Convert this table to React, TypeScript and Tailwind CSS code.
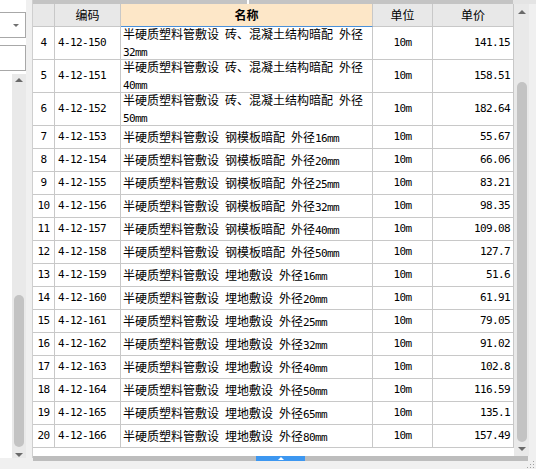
import React from "react";

type Row = { n: number; code: string; name: string; unit: string; price: string; tall?: boolean };

const rows: Row[] = [
  { n: 4, code: "4-12-150", name: "半硬质塑料管敷设 砖、混凝土结构暗配 外径32mm", unit: "10m", price: "141.15", tall: true },
  { n: 5, code: "4-12-151", name: "半硬质塑料管敷设 砖、混凝土结构暗配 外径40mm", unit: "10m", price: "158.51", tall: true },
  { n: 6, code: "4-12-152", name: "半硬质塑料管敷设 砖、混凝土结构暗配 外径50mm", unit: "10m", price: "182.64", tall: true },
  { n: 7, code: "4-12-153", name: "半硬质塑料管敷设 钢模板暗配 外径16mm", unit: "10m", price: "55.67" },
  { n: 8, code: "4-12-154", name: "半硬质塑料管敷设 钢模板暗配 外径20mm", unit: "10m", price: "66.06" },
  { n: 9, code: "4-12-155", name: "半硬质塑料管敷设 钢模板暗配 外径25mm", unit: "10m", price: "83.21" },
  { n: 10, code: "4-12-156", name: "半硬质塑料管敷设 钢模板暗配 外径32mm", unit: "10m", price: "98.35" },
  { n: 11, code: "4-12-157", name: "半硬质塑料管敷设 钢模板暗配 外径40mm", unit: "10m", price: "109.08" },
  { n: 12, code: "4-12-158", name: "半硬质塑料管敷设 钢模板暗配 外径50mm", unit: "10m", price: "127.7" },
  { n: 13, code: "4-12-159", name: "半硬质塑料管敷设 埋地敷设 外径16mm", unit: "10m", price: "51.6" },
  { n: 14, code: "4-12-160", name: "半硬质塑料管敷设 埋地敷设 外径20mm", unit: "10m", price: "61.91" },
  { n: 15, code: "4-12-161", name: "半硬质塑料管敷设 埋地敷设 外径25mm", unit: "10m", price: "79.05" },
  { n: 16, code: "4-12-162", name: "半硬质塑料管敷设 埋地敷设 外径32mm", unit: "10m", price: "91.02" },
  { n: 17, code: "4-12-163", name: "半硬质塑料管敷设 埋地敷设 外径40mm", unit: "10m", price: "102.8" },
  { n: 18, code: "4-12-164", name: "半硬质塑料管敷设 埋地敷设 外径50mm", unit: "10m", price: "116.59" },
  { n: 19, code: "4-12-165", name: "半硬质塑料管敷设 埋地敷设 外径65mm", unit: "10m", price: "135.1" },
  { n: 20, code: "4-12-166", name: "半硬质塑料管敷设 埋地敷设 外径80mm", unit: "10m", price: "157.49" },
];

function Mixed({ text }: { text: string }) {
  const parts = text.split(/([\x00-\x7F]+)/).filter((p) => p.length > 0);
  return (
    <>
      {parts.map((p, i) =>
        /^[\x00-\x7F]+$/.test(p) ? (
          <span key={i} className="font-['DejaVu_Sans_Mono'] text-[11px] tracking-[-0.62px] whitespace-pre">
            {p}
          </span>
        ) : (
          <span key={i}>{p}</span>
        )
      )}
    </>
  );
}

function UpTri({ color = "border-b-[#6a6a6a]" }: { color?: string }) {
  return <div className={`w-0 h-0 border-x-[4px] border-x-transparent border-b-[4px] ${color}`} />;
}
function DownTri() {
  return <div className="w-0 h-0 border-x-[4px] border-x-transparent border-t-[4px] border-t-[#6a6a6a]" />;
}

export default function App() {
  return (
    <div className="w-[536px] h-[469px] flex flex-col bg-[#f0f0f0] overflow-hidden font-['Noto_Sans_CJK_SC',sans-serif] text-[12px] text-black">
      <div className="flex h-[461px]">
        {/* left panel */}
        <div className="w-[26px] flex flex-col">
          <div className="h-[458px] bg-white flex flex-col">
            <div className="mt-[12px] h-[26px] w-[26px] border-y border-r border-[#a8a8a8] flex items-center justify-end pr-[6px]">
              <div className="w-0 h-0 border-x-[3px] border-x-transparent border-t-[3px] border-t-[#707070]" />
            </div>
            <div className="mt-[7px] h-[26px] w-[26px] border-y border-r border-[#a8a8a8]" />
            <div className="mt-[3px] ml-[12px] w-[14px] flex-1 bg-[#e9e9e9] flex flex-col items-center">
              <div className="mt-[4px]">
                <UpTri />
              </div>
              <div className="mt-[213px] w-[10px] h-[152px] rounded-[5px] bg-[#c3c3c3]" />
              <div className="mt-[6px]">
                <DownTri />
              </div>
            </div>
          </div>
        </div>
        {/* splitter */}
        <div className="w-[6px] h-[458px] bg-[#f0f0f0]" />
        <div className="w-[1px] h-[458px] bg-[#cfcfcf]" />
        {/* table panel */}
        <div className="flex-1 flex flex-col">
          <div className="h-[4px] flex">
            <div className="w-[214px] bg-[#c4c4c4]" />
            <div className="w-[2px] bg-white" />
            <div className="w-[264px] bg-[#c4c4c4]" />
            <div className="flex-1 bg-[#e4e4e4]" />
          </div>
          <div className="h-[452px] flex">
            <div className="w-[481px] bg-white flex flex-col">
              {/* header */}
              <div className="flex h-[23px]">
                <div className="w-[22px] bg-[#e8e8e8] border-r border-b border-[#c8c8c8]" />
                <div className="w-[66px] bg-[#e8e8e8] border-r border-b border-[#c8c8c8] flex items-center justify-center">编码</div>
                <div className="w-[252px] bg-[#fde7c8] border-r border-[#c8c8c8] border-b border-b-[#4a90d9] flex items-center justify-center font-bold">名称</div>
                <div className="w-[60px] bg-[#e8e8e8] border-r border-b border-[#c8c8c8] flex items-center justify-center">单位</div>
                <div className="w-[81px] bg-[#e8e8e8] border-r border-b border-[#c8c8c8] flex items-center justify-center">单价</div>
              </div>
              {rows.map((r) => (
                <div key={r.n} className={`flex border-b border-[#c8c8c8] ${r.tall ? "h-[33px]" : "h-[23px]"}`}>
                  <div className="w-[22px] border-r border-[#c8c8c8] flex items-center justify-center">
                    <Mixed text={String(r.n)} />
                  </div>
                  <div className="w-[66px] border-r border-[#c8c8c8] flex items-center pl-[3px]">
                    <Mixed text={r.code} />
                  </div>
                  <div className="w-[252px] border-r border-[#c8c8c8] flex items-center pl-[2px] pr-[1px] leading-[15px]">
                    <div>
                      <Mixed text={r.name} />
                    </div>
                  </div>
                  <div className="w-[60px] border-r border-[#c8c8c8] flex items-center justify-center">
                    <Mixed text={r.unit} />
                  </div>
                  <div className="w-[81px] border-r border-[#c8c8c8] flex items-center justify-end pr-[3px]">
                    <Mixed text={r.price} />
                  </div>
                </div>
              ))}
            </div>
            {/* right scrollbar */}
            <div className="w-[15px] bg-[#e9e9e9] flex flex-col items-center">
              <div className="mt-[6px]">
                <UpTri />
              </div>
              <div className="mt-[68px] w-[10px] h-[360px] rounded-[5px] bg-[#c3c3c3]" />
              <div className="mt-[5px]">
                <DownTri />
              </div>
            </div>
            <div className="flex-1 bg-[#f0f0f0]" />
          </div>
          {/* horizontal splitter bar */}
          <div className="h-[5px] flex">
            <div className="w-[223px] bg-[#bdbdbd]" />
            <div className="w-[49px] bg-[#3d97f0] flex items-center justify-center">
              <div className="w-0 h-0 border-x-[3px] border-x-transparent border-b-[3px] border-b-white" />
            </div>
            <div className="w-[223px] bg-[#bdbdbd]" />
            <div className="flex-1" />
          </div>
        </div>
      </div>
      <div className="h-[8px] flex justify-end">
        <svg width="8" height="8" viewBox="0 0 8 8" className="mr-[1px]">
          <rect x="6" y="0" width="1" height="1" fill="#a0a0a0" />
          <rect x="3" y="3" width="1" height="1" fill="#a0a0a0" />
          <rect x="6" y="3" width="1" height="1" fill="#a0a0a0" />
          <rect x="0" y="6" width="1" height="1" fill="#a0a0a0" />
          <rect x="3" y="6" width="1" height="1" fill="#a0a0a0" />
          <rect x="6" y="6" width="1" height="1" fill="#a0a0a0" />
        </svg>
      </div>
    </div>
  );
}
